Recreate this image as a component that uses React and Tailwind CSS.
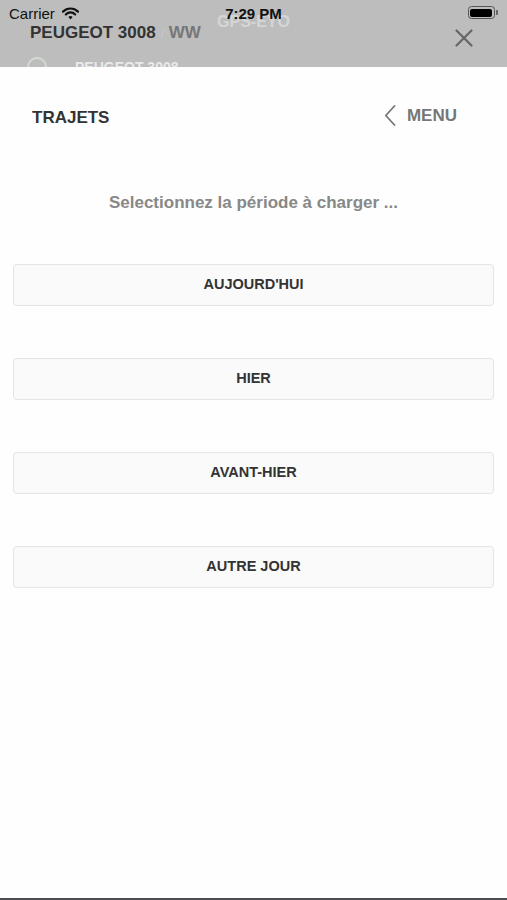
import { useState } from 'react';

const periods = ["AUJOURD'HUI", 'HIER', 'AVANT-HIER', 'AUTRE JOUR'];

const font = { fontFamily: '"Liberation Sans", Arial, sans-serif' };

const Wifi = () => (
  <svg width="17" height="13" viewBox="0 0 17 13" className="ml-[7px] mt-[2px]">
    <path d="M1 4.6a10.6 10.6 0 0 1 15 0" fill="none" stroke="#111" strokeWidth="2.2" strokeLinecap="round" />
    <path d="M3.8 7.4a6.6 6.6 0 0 1 9.4 0" fill="none" stroke="#111" strokeWidth="2.2" strokeLinecap="round" />
    <path d="M6.4 10.1l2.1 2.3 2.1-2.3a3 3 0 0 0-4.2 0z" fill="#111" />
  </svg>
);

const Battery = () => (
  <div className="flex items-center mt-[1px]">
    <div className="w-[27px] h-[13px] rounded-[3.5px] border border-[#555] p-[1.5px]">
      <div className="w-full h-full rounded-[2px] bg-black" />
    </div>
    <div className="w-[2px] h-[5px] rounded-r-[1px] bg-[#666] ml-[1px]" />
  </div>
);

const Periods = () => {
  const [selected, setSelected] = useState(null);

  return (
    <div className="flex flex-col gap-[52px] mt-[51px]">
      {periods.map((p) => (
        <button
          key={p}
          onClick={() => setSelected(p)}
          className={`h-[42px] w-full rounded-[4px] border border-[#e4e4e4] text-[14.5px] font-bold text-[#333] ${
            selected === p ? 'bg-[#f0f0f0]' : 'bg-[#fafafa]'
          }`}
        >
          {p}
        </button>
      ))}
    </div>
  );
};

export default function App() {
  return (
    <div className="min-h-[900px] w-full flex flex-col bg-[#fefefe]" style={font}>
      {/* Dimmed background view + status bar */}
      <div className="relative h-[67px] bg-[#bdbdbd] overflow-hidden shrink-0">
        <div className="absolute left-0 right-0 top-[10px] text-center text-[16px] font-bold text-white/40">
          GPS-EYO
        </div>
        <div className="absolute left-[27px] top-[57px] w-[20px] h-[20px] rounded-full border-2 border-[#d8e8dc]/70" />
        <div className="absolute left-[75px] top-[57px] text-[14px] font-bold text-white/70">PEUGEOT 3008</div>

        <div className="relative h-[23px] pt-[5px] px-[9px] flex items-start justify-between">
          <div className="flex items-start w-[120px]">
            <span className="text-[15px] leading-[18px] text-[#111]">Carrier</span>
            <Wifi />
          </div>
          <span className="text-[15px] leading-[18px] font-bold text-[#111]">7:29 PM</span>
          <div className="w-[120px] flex justify-end">
            <Battery />
          </div>
        </div>

        <div className="relative h-[20px] pl-[30px] pr-[34px] flex items-start justify-between">
          <div className="text-[17px] leading-[20px] font-bold text-[#333]">
            PEUGEOT 3008 <span className="text-[#c8c8c8] font-normal text-[13px]">/</span>{' '}
            <span className="text-[#777]">WW</span>
          </div>
          <svg width="18" height="18" viewBox="0 0 18 18" className="mt-[6px]">
            <path d="M1.5 1.5l15 15M16.5 1.5l-15 15" stroke="#666" strokeWidth="2.2" strokeLinecap="round" />
          </svg>
        </div>
      </div>

      {/* Sheet */}
      <div className="flex-1 px-[13px] pt-[38px]">
        <div className="flex items-start justify-between pl-[19px] pr-[37px]">
          <span className="mt-[3px] text-[17px] leading-[20px] font-bold text-[#333]">TRAJETS</span>
          <button className="flex items-center text-[17px] leading-[20px] font-bold text-[#777]">
            <svg width="12" height="21" viewBox="0 0 12 21" className="mr-[11px]">
              <path d="M10.5 1L1.8 10.5l8.7 9.5" fill="none" stroke="#777" strokeWidth="1.8" strokeLinecap="round" strokeLinejoin="round" />
            </svg>
            MENU
          </button>
        </div>

        <p className="mt-[65px] text-center text-[17px] leading-[20px] font-bold text-[#888]">
          Selectionnez la période à charger ...
        </p>

        <Periods />
      </div>

      <div className="h-[2px] bg-[#4a4d52] shrink-0" />
    </div>
  );
}
